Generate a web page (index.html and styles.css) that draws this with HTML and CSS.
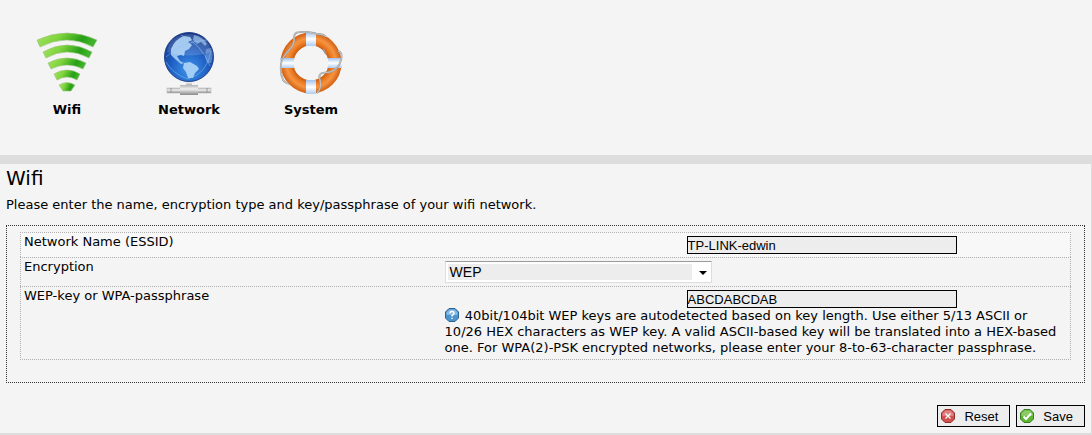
FILE: index.html
```html
<!DOCTYPE html>
<html lang="en">
<head>
  <meta charset="UTF-8" />
  <title>Wifi</title>
  <link rel="stylesheet" href="styles.css">
</head>
<body>
  <nav class="navbar">
    <a href="#wifi">
      <svg width="64" height="64" viewBox="0 0 64 64">
        <defs>
          <linearGradient id="green" x1="0" y1="0" x2="1" y2="0.2">
            <stop offset="0" stop-color="#a5e465" />
            <stop offset="0.4" stop-color="#7fd43c" />
            <stop offset="0.8" stop-color="#25a016" />
            <stop offset="1" stop-color="#3fb32a" />
          </linearGradient>
        </defs>
        <g fill="url(#green)" stroke="#9dbf84" stroke-width="0.6">
          <path d="M2 9Q32-5 62 9L58 16Q32 2 5 16Z" />
          <path d="M8 21Q32 7 57 21L54 27Q32 15 11 27Z" />
          <path d="M13 32Q32 22 51 32L48 38Q32 30 16 38Z" />
          <path d="M19 43Q32 35 45 43L42 49Q32 43 22 49Z" />
          <path d="M24 54Q32 49 40 54L36 60H28Z" />
        </g>
      </svg>
      <span>Wifi</span>
    </a>
    <a href="#network">
      <svg width="64" height="64" viewBox="0 0 64 64">
        <defs>
          <radialGradient id="ocean" cx="0.5" cy="0.75" r="0.75">
            <stop offset="0" stop-color="#3f97ea" />
            <stop offset="0.5" stop-color="#1f5fc4" />
            <stop offset="1" stop-color="#13307f" />
          </radialGradient>
          <linearGradient id="metal" x1="0" y1="0" x2="0" y2="1">
            <stop offset="0" stop-color="#b5b5b5" />
            <stop offset="0.4" stop-color="#f0f0f0" />
            <stop offset="1" stop-color="#8a8a8a" />
          </linearGradient>
        </defs>
        <rect x="29" y="48" width="6" height="8" fill="url(#metal)" />
        <circle cx="32" cy="26" r="24.5" fill="url(#ocean)" stroke="#24448f" />
        <g fill="#a4cdf6">
          <path d="M14 18Q18 8 27 5L33 6L35 9L31 11L35 14L32 18L28 20L27 25L24 24L20 25L23 30L27 32L24 33L18 28L14 24Z" opacity="0.9" />
          <path d="M27 32L33 31L40 35L42 38L38 42L36 47L31 47L29 41L26 37Z" />
          <path d="M37 4Q46 6 50 13L48 15L44 11L40 13L36 9Z" opacity="0.6" />
          <path d="M49 18L54 17Q57 25 54 32L50 32L48 26Z" opacity="0.4" />
        </g>
        <g fill="none" stroke="#82bcf5" stroke-width="0.8" opacity="0.7">
          <path d="M9 26Q25 10 50 9" />
          <path d="M9 31Q16 43 31 48Q50 43 54 20" />
          <path d="M24 4Q44 12 53 35" />
        </g>
        <path d="M10 21Q12 4 32 3Q52 4 54 21Q33 28 10 21Z" fill="#fff" opacity="0.15" />
        <rect x="10" y="57" width="44" height="5" fill="url(#metal)" stroke="#bbb" stroke-width="0.6" />
        <rect x="23" y="54" width="18" height="10" fill="url(#metal)" />
        <path d="M14 57V62M50 57V62" stroke="#999" />
      </svg>
      <span>Network</span>
    </a>
    <a href="#system">
      <svg width="64" height="64" viewBox="0 0 64 64">
        <defs>
          <radialGradient id="buoy" gradientUnits="userSpaceOnUse" cx="32" cy="32" r="31">
            <stop offset="0.56" stop-color="#c95a10" />
            <stop offset="0.68" stop-color="#ec7c22" />
            <stop offset="0.8" stop-color="#f59443" />
            <stop offset="1" stop-color="#cf5a0c" />
          </radialGradient>
          <linearGradient id="band" x1="0" y1="0" x2="0" y2="1">
            <stop offset="0" stop-color="#9fc0ee" />
            <stop offset="0.5" stop-color="#fff" />
            <stop offset="1" stop-color="#b0ccf2" />
          </linearGradient>
        </defs>
        <circle cx="32" cy="32" r="24" fill="none" stroke="url(#buoy)" stroke-width="13" />
        <g fill="url(#band)">
          <rect x="27" y="1" width="10" height="14" />
          <rect x="27" y="49" width="10" height="14" />
          <rect x="1" y="27" width="14" height="10" />
          <rect x="49" y="27" width="14" height="10" />
        </g>
        <g fill="none" stroke="#999" stroke-width="1.8">
          <path d="M47 6Q45 3 38 3Q29 0 21 1Q15 1 15 7Q16 13 10 19Q3 26 2 33Q1 42 4 49Q6 52 10 53M59 20Q64 21 62 29Q60 38 51 41L43 42Q39 44 41 49Q43 57 38 62M44 18L47 23" />
          <path stroke="#d2d2d2" stroke-width="0.8" d="M47 6Q45 3 38 3Q29 0 21 1Q15 1 15 7Q16 13 10 19Q3 26 2 33Q1 42 4 49Q6 52 10 53M59 20Q64 21 62 29Q60 38 51 41L43 42Q39 44 41 49Q43 57 38 62" />
        </g>
      </svg>
      <span>System</span>
    </a>
  </nav>

  <form class="content">
    <h1>Wifi</h1>
    <p>Please enter the name, encryption type and key/passphrase of your wifi network.</p>

    <div class="settings">
      <div class="row">
        <label for="essid">Network Name (ESSID)</label>
        <div class="value">
          <input type="text" id="essid" value="TP-LINK-edwin">
        </div>
      </div>
      <div class="row">
        <label for="encryption">Encryption</label>
        <div class="value">
          <div class="select">
            <select id="encryption">
              <option>WEP</option>
            </select>
          </div>
        </div>
      </div>
      <div class="row">
        <label for="key">WEP-key or WPA-passphrase</label>
        <div class="value">
          <input type="text" id="key" value="ABCDABCDAB">
          <div class="help">
            <svg width="14" height="14" viewBox="0 0 14 14">
              <path d="M4 .5H10L13.500 4V10L10 13.500H4L.5 10V4Z" fill="#4d94cf" stroke="#2b618f" />
              <path d="M4.500 1.500H9.500L12.500 4.500V7H1.500V4.500Z" fill="#83b9e4" />
              <path d="M5 5.500Q5 3.500 7 3.500Q9 3.500 9 5.200Q9 6.500 7 7.500V8.500M7 9.700V11" fill="none" stroke="#fff" stroke-width="1.400" />
            </svg>
            40bit/104bit WEP keys are autodetected based on key length. Use either 5/13 ASCII or 10/26 HEX characters as WEP key. A valid ASCII-based key will be translated into a HEX-based one. For WPA(2)-PSK encrypted networks, please enter your 8-to-63-character passphrase.
          </div>
        </div>
      </div>
    </div>

    <div class="actions">
      <button type="reset">
        <svg width="14" height="14" viewBox="0 0 14 14">
          <path d="M4 .5H10L13.500 4V10L10 13.500H4L.5 10V4Z" fill="#d05050" stroke="#8f2f2f" />
          <path d="M4.500 1.500H9.500L12.500 4.500V7H1.500V4.500Z" fill="#e08080" />
          <path d="M4.500 4.500L9.500 9.500M9.500 4.500L4.500 9.500" stroke="#fff" stroke-width="1.200" />
        </svg>
        Reset
      </button>
      <button type="submit">
        <svg width="14" height="14" viewBox="0 0 14 14">
          <path d="M4 .5H10L13.500 4V10L10 13.500H4L.5 10V4Z" fill="#5cb532" stroke="#3a7d1e" />
          <path d="M4.500 1.500H9.500L12.500 4.500V7H1.500V4.500Z" fill="#8acb68" />
          <path d="M3.500 7.500L6 10L11 4.500" fill="none" stroke="#fff" stroke-width="2" />
        </svg>
        Save
      </button>
    </div>
  </form>
</body>
</html>
```

FILE: styles.css
```css
body {
  margin: 0;
  font-family: Verdana, "DejaVu Sans", sans-serif;
  font-size: 13px;
  line-height: 16px;
  color: #000;
  background: #f4f4f4;
}

.navbar {
  display: flex;
  padding: 31px 6px 37px;
  border-bottom: 9px solid #ddd;
}

.navbar a {
  display: flex;
  flex-direction: column;
  align-items: center;
  gap: 7px;
  width: 122px;
  color: #000;
  font-weight: bold;
  text-decoration: none;
}

.content {
  padding: 2px 6px 6px;
  border-right: 1px solid #ddd;
  border-bottom: 2px solid #ddd;
}

h1 {
  margin: 0;
  font-size: 20px;
  line-height: 24px;
  font-weight: normal;
}

p {
  margin: 7px 0 12px;
}

.settings {
  padding: 6px 13px 22px;
  border: 1px dotted #333;
}

.row {
  display: grid;
  grid-template-columns: 40% 60%;
  border: 1px dotted #b0b0b0;
  border-bottom: none;
}

.row:first-child {
  background: #f8f8f8;
}

.row:last-child {
  border-bottom: 1px dotted #b0b0b0;
}

.row label {
  padding: 1px 3px;
}

.value {
  padding: 3px 4px;
}

input {
  display: block;
  box-sizing: border-box;
  width: 270px;
  height: 18px;
  margin-left: 242px;
  padding: 0;
  border: 1px solid #000;
  border-radius: 0;
  background: #ededed;
  font-family: "Liberation Sans", Arial, sans-serif;
  font-size: 13px;
}

.select {
  position: relative;
  width: 267px;
}

/* arrow of the drop-down */
.select::after {
  content: "";
  position: absolute;
  top: 10px;
  right: 5px;
  border: 4px solid transparent;
  border-top-color: #000;
  border-bottom: none;
  pointer-events: none;
}

select {
  display: block;
  width: 100%;
  height: 22px;
  padding: 2px;
  border: 1px solid #ddd;
  border-top-color: #999;
  border-radius: 0;
  background: linear-gradient(to right, #ededed 244px, #fff 244px) content-box, #fff;
  font-family: "Liberation Sans", Arial, sans-serif;
  font-size: 14px;
  line-height: 16px;
  text-indent: 2px;
  appearance: none;
}

.help svg {
  margin-right: 2px;
  vertical-align: -2px;
}

.actions {
  display: flex;
  justify-content: flex-end;
  gap: 6px;
  margin-top: 22px;
}

button {
  display: flex;
  align-items: center;
  gap: 9px;
  height: 22px;
  padding: 0 11px 0 3px;
  border: 1px solid #000;
  border-radius: 0;
  background: #ededed;
  font-family: "Liberation Sans", Arial, sans-serif;
  font-size: 13px;
}
```
